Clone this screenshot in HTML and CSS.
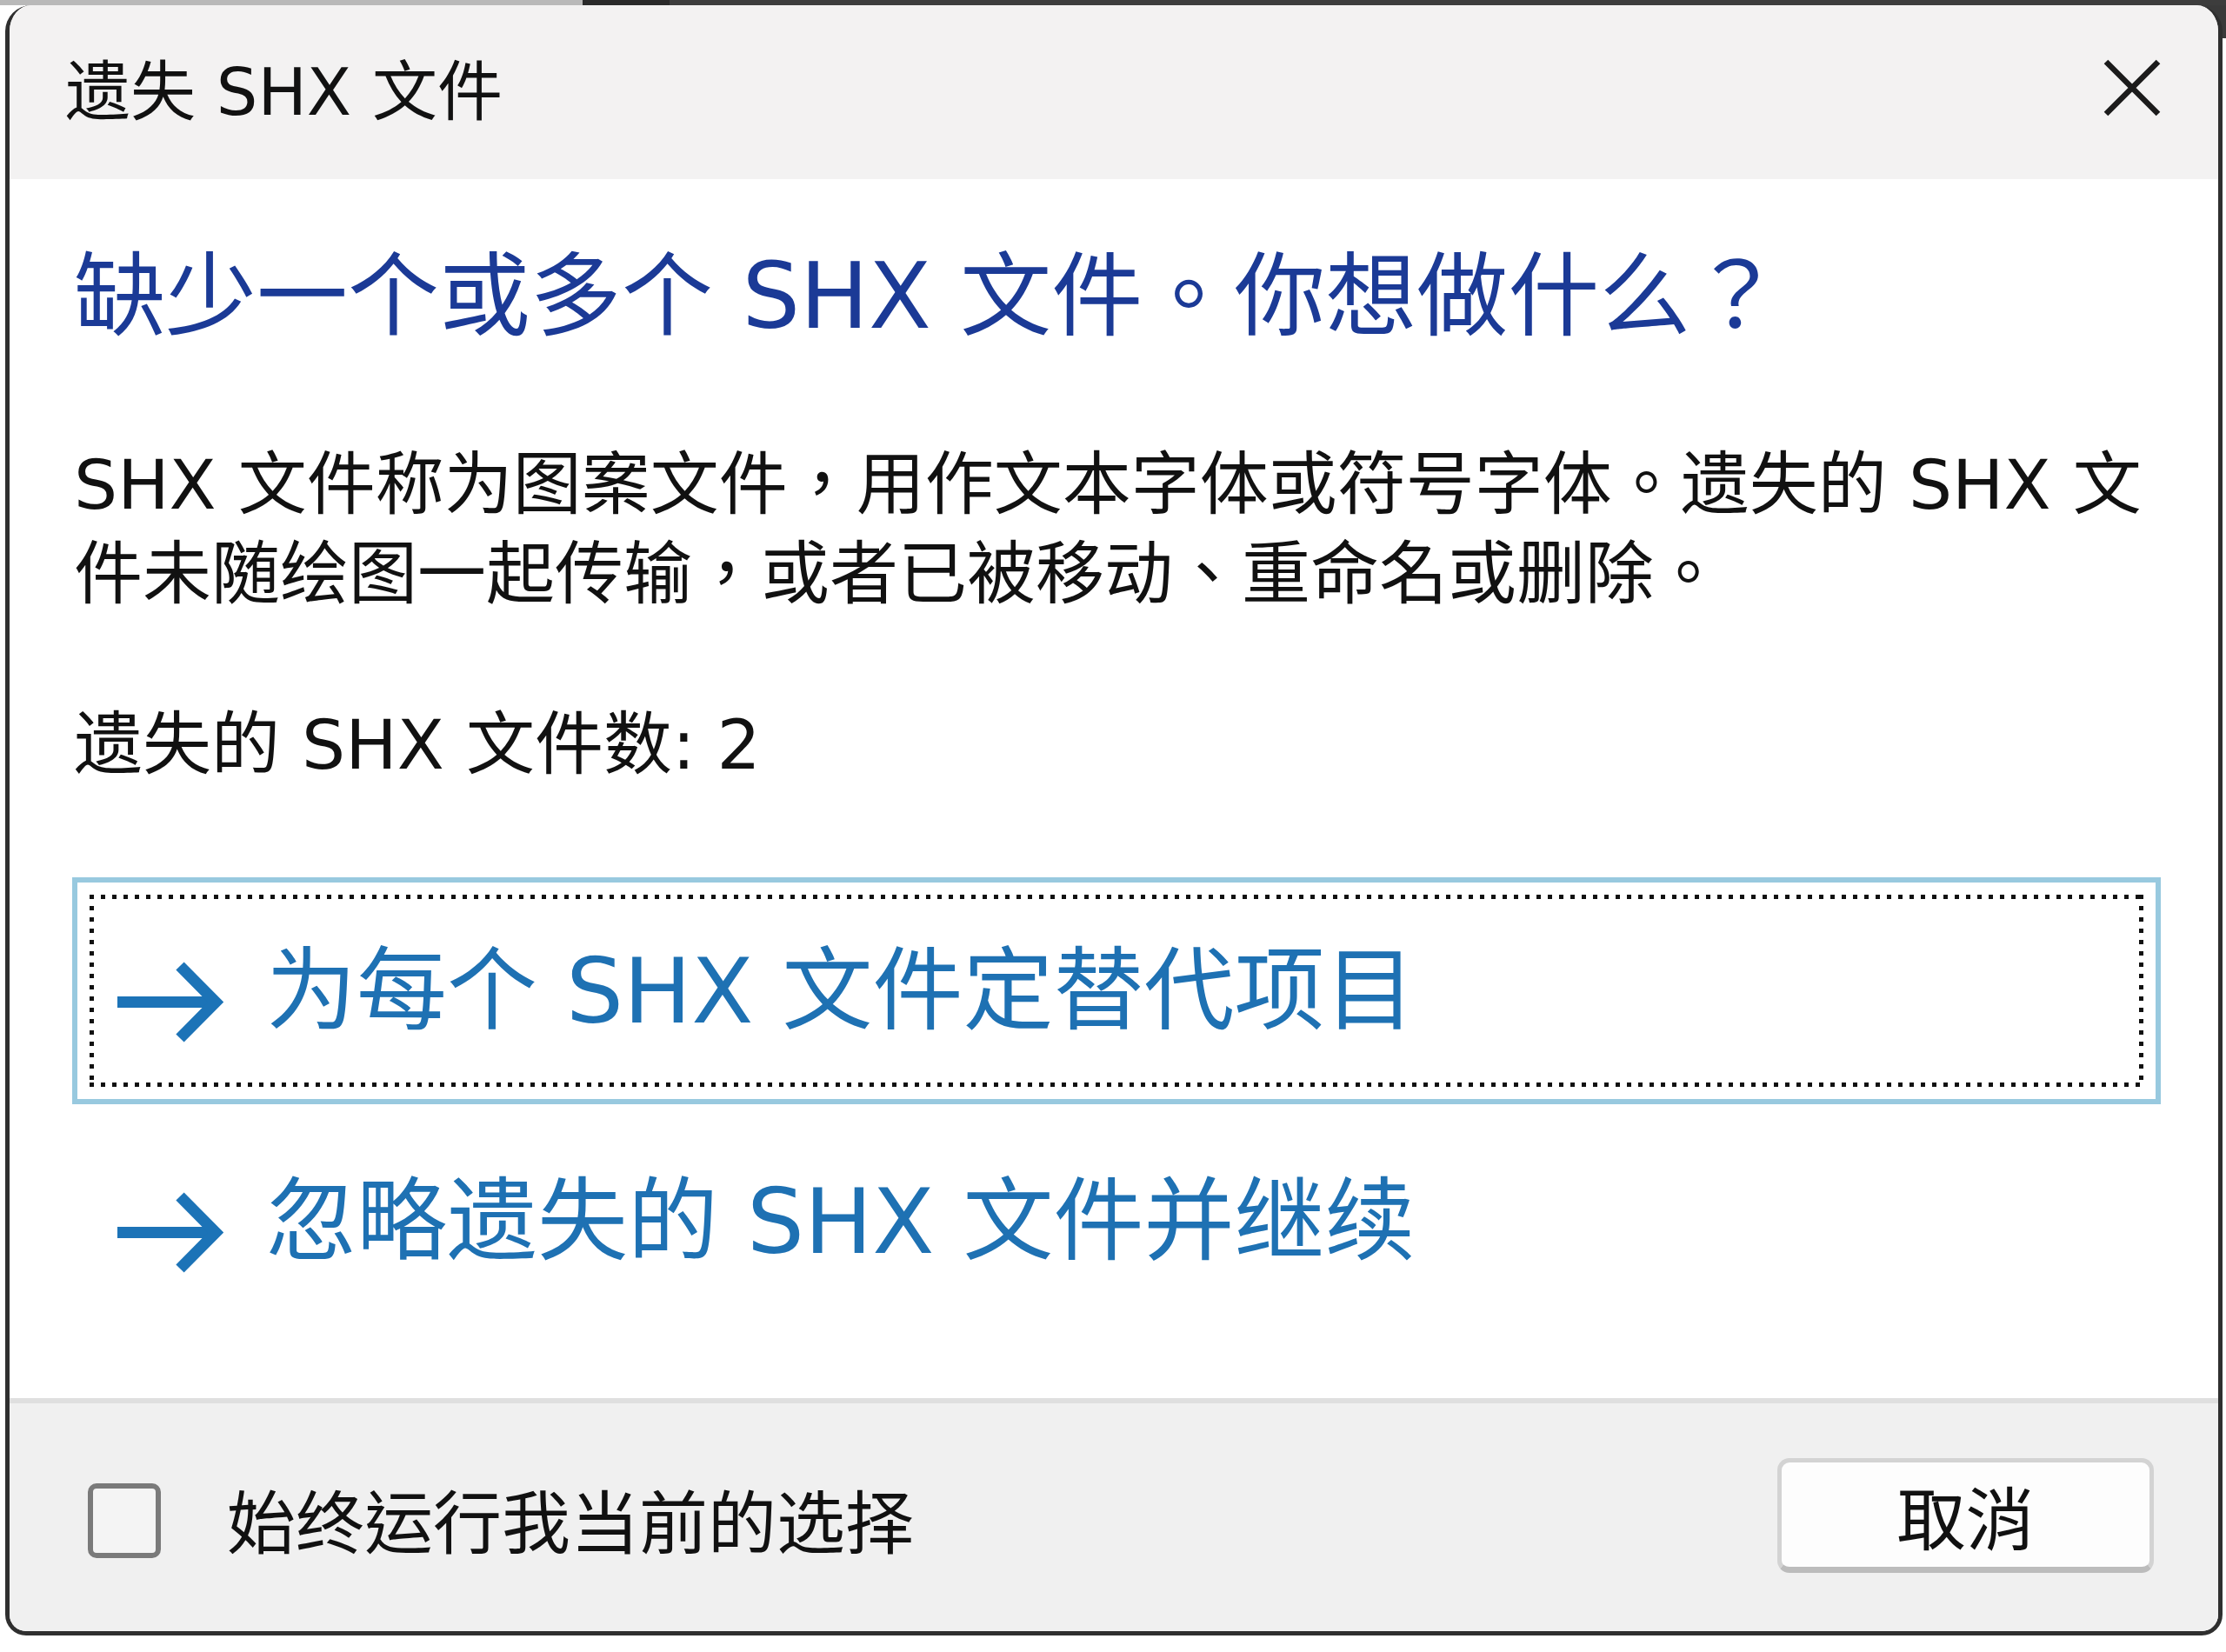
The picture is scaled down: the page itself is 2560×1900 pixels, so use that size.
FILE: index.html
```html
<!DOCTYPE html>
<html lang="zh-TW">
<head>
    <meta charset="UTF-8">
    <meta name="viewport" content="width=device-width, initial-scale=1.0">
    <title>遗失 SHX 文件</title>
    <link rel="stylesheet" href="styles.css">
</head>
<body>

<div class="dialog">
    <div class="titlebar">
        <span class="title">遗失 SHX 文件</span>
        <button class="close" aria-label="关闭">
            <svg width="66" height="66" viewBox="0 0 66 66">
                <path d="M3 3 L63 63 M63 3 L3 63" stroke="#1b1b1b" stroke-width="6.5" fill="none"/>
            </svg>
        </button>
    </div>

    <div class="content">
        <h1 class="instruction">缺少一个或多个 SHX 文件。你想做什么？</h1>
        <p class="desc">SHX 文件称为图案文件，用作文本字体或符号字体。遗失的 SHX 文<br>件未随绘图一起传输，或者已被移动、重命名或删除。</p>
        <p class="count">遗失的 SHX 文件数: 2</p>

        <div class="commands">
            <a class="command focused" href="#">
                <svg class="arrow" width="122" height="96" viewBox="0 0 122 96">
                    <rect x="0" y="40" width="108" height="13" fill="#1c73b7"/>
                    <path d="M72 5 L113 46.5 L72 88" stroke="#1c73b7" stroke-width="13" fill="none"/>
                </svg>
                <span class="command-text">为每个 SHX 文件定替代项目</span>
            </a>
            <a class="command" href="#">
                <svg class="arrow" width="122" height="96" viewBox="0 0 122 96">
                    <rect x="0" y="40" width="108" height="13" fill="#1c73b7"/>
                    <path d="M72 5 L113 46.5 L72 88" stroke="#1c73b7" stroke-width="13" fill="none"/>
                </svg>
                <span class="command-text">忽略遗失的 SHX 文件并继续</span>
            </a>
        </div>
    </div>

    <div class="footer">
        <label class="remember">
            <span class="checkbox"></span>
            <span class="remember-text">始终运行我当前的选择</span>
        </label>
        <button class="cancel">取消</button>
    </div>
</div>

</body>
</html>
```

FILE: styles.css
```css
* {
    box-sizing: border-box;
}
body {
    margin: 0;
    width: 2560px;
    height: 1900px;
    font-family: "DejaVu Sans", "Noto Sans CJK TC", sans-serif;
    color: #111;
    background:
        linear-gradient(to right, #b9b9b9 0 670px, #2a2a2a 670px 770px, #3d3d3d 770px) left top / 100% 6px no-repeat,
        linear-gradient(#3a3a3a, #3a3a3a) right top / 40px 44px no-repeat,
        #fff;
}
.dialog {
    margin: 6px 0 0 6px;
    width: 2550px;
    height: 1875px;
    display: flex;
    flex-direction: column;
    border: 5px solid #2f2f2f;
    border-top: none;
    border-radius: 30px 30px 24px 24px;
    overflow: hidden;
    background: #fff;
}
.titlebar {
    height: 200px;
    flex: none;
    display: flex;
    align-items: center;
    justify-content: space-between;
    padding: 0 66px 0 64px;
    background: #f3f2f2;
}
.title {
    font-size: 75px;
    line-height: 100px;
    color: #111;
}
.close {
    background: none;
    border: none;
    padding: 0;
    width: 66px;
    height: 66px;
    margin-top: -10px;
    display: flex;
}
.content {
    flex: 1;
    padding: 65px 66px 0 72px;
}
.instruction {
    margin: 0;
    padding-left: 2px;
    font-size: 105px;
    font-weight: normal;
    line-height: 140px;
    color: #1b3a96;
    white-space: nowrap;
}
.desc {
    margin: 96px 0 0;
    padding-left: 2px;
    font-size: 79px;
    line-height: 103px;
    white-space: nowrap;
}
.count {
    margin: 93px 0 0;
    padding-left: 2px;
    font-size: 79px;
    line-height: 103px;
}
.commands {
    margin-top: 100px;
    display: flex;
    flex-direction: column;
    gap: 4px;
}
.command {
    position: relative;
    height: 261px;
    display: flex;
    align-items: center;
    padding-left: 46px;
    border: 6px solid transparent;
    text-decoration: none;
    color: #1e71b3;
}
.command.focused {
    border-color: #98c9df;
}
.command.focused::before {
    content: "";
    position: absolute;
    inset: 14px;
    background:
        repeating-linear-gradient(to right, #111 0 5px, transparent 5px 13px) left top / 100% 5px no-repeat,
        repeating-linear-gradient(to right, #111 0 5px, transparent 5px 13px) left bottom / 100% 5px no-repeat,
        repeating-linear-gradient(to bottom, #111 0 5px, transparent 5px 13px) left top / 5px 100% no-repeat,
        repeating-linear-gradient(to bottom, #111 0 5px, transparent 5px 13px) right top / 5px 100% no-repeat;
}
.arrow {
    flex: none;
    margin-top: 28px;
}
.command-text {
    margin-left: 49px;
    font-size: 104px;
    line-height: 140px;
    white-space: nowrap;
}
.footer {
    height: 268px;
    flex: none;
    display: flex;
    align-items: center;
    padding: 0 74px 0 90px;
    border-top: 6px solid #dfdfdf;
    background: #f0f0f0;
}
.remember {
    display: flex;
    align-items: center;
    margin-top: 8px;
}
.checkbox {
    width: 84px;
    height: 86px;
    border: 6px solid #7a7a7a;
    border-radius: 10px;
    background: #f4f4f4;
}
.remember-text {
    margin-left: 76px;
    font-size: 79px;
    line-height: 103px;
    margin-top: 10px;
}
.cancel {
    margin-left: auto;
    width: 433px;
    height: 132px;
    margin-top: -4px;
    border: 5px solid #d3d3d3;
    border-bottom: 7px solid #bcbcbc;
    border-radius: 14px;
    background: #fdfdfd;
    font-family: inherit;
    font-size: 79px;
    color: #111;
}
```
